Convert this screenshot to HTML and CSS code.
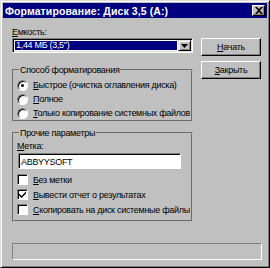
FILE: index.html
```html
<!DOCTYPE html>
<html>
<head>
<meta charset="utf-8">
<link rel="stylesheet" href="styles.css">
</head>
<body>
<div class="window">
  <div class="titlebar">
    <span class="title">Форматирование: Диск 3,5 (A:)</span>
    <span class="close"><svg width="8" height="7" viewBox="0 0 8 7"><path d="M0 0h2l2 2 2-2h2L5 3.5 8 7H6L4 5 2 7H0l3-3.5z" fill="#000"/></svg></span>
  </div>
  <div class="body">
    <div class="top">
      <div class="left">
        <div class="label"><u>Е</u>мкость:</div>
        <div class="combo">
          <div class="combo-field">1,44 МБ (3,5")</div>
          <div class="combo-btn"><svg width="7" height="4" viewBox="0 0 7 4"><path d="M0 0h7L3.5 4z" fill="#000"/></svg></div>
        </div>
        <fieldset class="group g1">
          <legend>Способ форматирования</legend>
          <div class="opt"><span class="radio on"></span><span><u>Б</u>ыстрое (очистка оглавления диска)</span></div>
          <div class="opt"><span class="radio"></span><span><u>П</u>олное</span></div>
          <div class="opt"><span class="radio"></span><span><u>Т</u>олько копирование системных файлов</span></div>
        </fieldset>
        <fieldset class="group g2">
          <legend>Прочие параметры</legend>
          <div class="label2"><u>М</u>етка:</div>
          <div class="input">ABBYYSOFT</div>
          <div class="opt chk"><span class="check"></span><span><u>Б</u>ез метки</span></div>
          <div class="opt chk"><span class="check"><svg width="9" height="9" viewBox="0 0 9 9"><path d="M1 3.5l2.5 2.5L8 1.5V3.5L3.5 8 1 5.5z" fill="#000"/></svg></span><span><u>В</u>ывести отчет о результатах</span></div>
          <div class="opt chk"><span class="check"></span><span><u>С</u>копировать на диск системные файлы</span></div>
        </fieldset>
      </div>
      <div class="right">
        <div class="btn"><u>Н</u>ачать</div>
        <div class="btn"><u>З</u>акрыть</div>
      </div>
    </div>
    <div class="status"></div>
  </div>
</div>
</body>
</html>
```
FILE: styles.css
```css
html, body { margin: 0; padding: 0; background: #c0c0c0; }
body { font-family: "Liberation Sans Narrow", "Liberation Sans", Arial, sans-serif; font-size: 9px; letter-spacing: -0.3px; color: #000; white-space: nowrap; }
.window {
  width: 270px; height: 268px; box-sizing: border-box;
  background: #c0c0c0;
  border: 1px solid; border-color: #dfdfdf #000 #000 #dfdfdf;
  box-shadow: inset 1px 1px #fff, inset -1px -1px #808080;
  padding: 2px;
  display: flex; flex-direction: column;
}
.titlebar {
  height: 15px; background: #000080; color: #fff;
  display: flex; align-items: center; justify-content: space-between;
  padding: 0 2px 0 2px;
}
.title { font-family: "Liberation Sans", Arial, sans-serif; font-weight: bold; font-size: 10.5px; letter-spacing: 0.1px; }
.close {
  width: 13px; height: 11px; box-sizing: border-box; background: #c0c0c0;
  border: 1px solid; border-color: #fff #000 #000 #fff;
  box-shadow: inset -1px -1px #808080;
  display: flex; align-items: center; justify-content: center;
}
.body { flex: 1; padding: 9px 6px 0 9px; display: flex; flex-direction: column; }
.top { display: flex; gap: 8px; }
.left { width: 181px; }
.right { width: 60px; padding-top: 11px; display: flex; flex-direction: column; gap: 5px; }
.label { height: 11px; line-height: 11px; margin-bottom: 0; }
.combo {
  height: 15px; box-sizing: border-box; display: flex;
  border: 1px solid; border-color: #808080 #fff #fff #808080;
  box-shadow: inset 1px 1px #000, inset -1px -1px #dfdfdf;
  background: #fff; padding: 2px;
}
.combo-field { flex: 1; background: #000080; color: #fff; line-height: 9px; padding-left: 1px; margin-right: 1px; }
.combo-btn {
  width: 13px; flex-shrink: 0; box-sizing: border-box; margin: -1px -1px -1px 0; background: #c0c0c0;
  border: 1px solid; border-color: #dfdfdf #000 #000 #dfdfdf;
  box-shadow: inset 1px 1px #fff, inset -1px -1px #808080;
  display: flex; align-items: center; justify-content: center;
}
.group {
  margin: 0; min-width: 0; border: 2px groove #c0c0c0; padding: 0 0 0 3px;
}
.group legend { padding: 0 1px; margin-left: 2px; line-height: 10px; }
.g1 { margin-top: 12px; padding-top: 3px; padding-bottom: 0; }
.g2 { margin-top: 6px; padding-top: 3px; padding-bottom: 3px; }
.opt { display: flex; align-items: center; height: 14px; gap: 5px; }
.chk { height: 15px; }
.radio {
  width: 11px; height: 11px; flex-shrink: 0; box-sizing: border-box; border-radius: 50%;
  border: 1px solid; border-color: #808080 #fff #fff #808080;
  background: #fff; box-shadow: inset 1px 1px #000;
  display: flex; align-items: center; justify-content: center;
}
.radio.on::after { content: ""; width: 3px; height: 3px; border-radius: 50%; background: #000; }
.check {
  width: 11px; height: 11px; flex-shrink: 0; box-sizing: border-box;
  border: 1px solid; border-color: #808080 #fff #fff #808080;
  background: #fff; box-shadow: inset 1px 1px #000;
  display: flex; align-items: center; justify-content: center;
}
.label2 { line-height: 11px; margin-top: 0; }
.input {
  width: 163px; height: 16px; box-sizing: border-box; background: #fff;
  border: 1px solid; border-color: #808080 #fff #fff #808080;
  box-shadow: inset 1px 1px #000; padding: 3px 2px; line-height: 10px;
  margin: 1px 0 3px 1px;
}
.btn {
  height: 18px; box-sizing: border-box; background: #c0c0c0;
  border: 1px solid; border-color: #fff #000 #000 #fff;
  box-shadow: inset -1px -1px #808080;
  display: flex; align-items: center; justify-content: center;
}
.status {
  margin-top: 21px; height: 17px; box-sizing: border-box; width: 250px;
  border: 1px solid; border-color: #808080 #fff #fff #808080;
}
```
